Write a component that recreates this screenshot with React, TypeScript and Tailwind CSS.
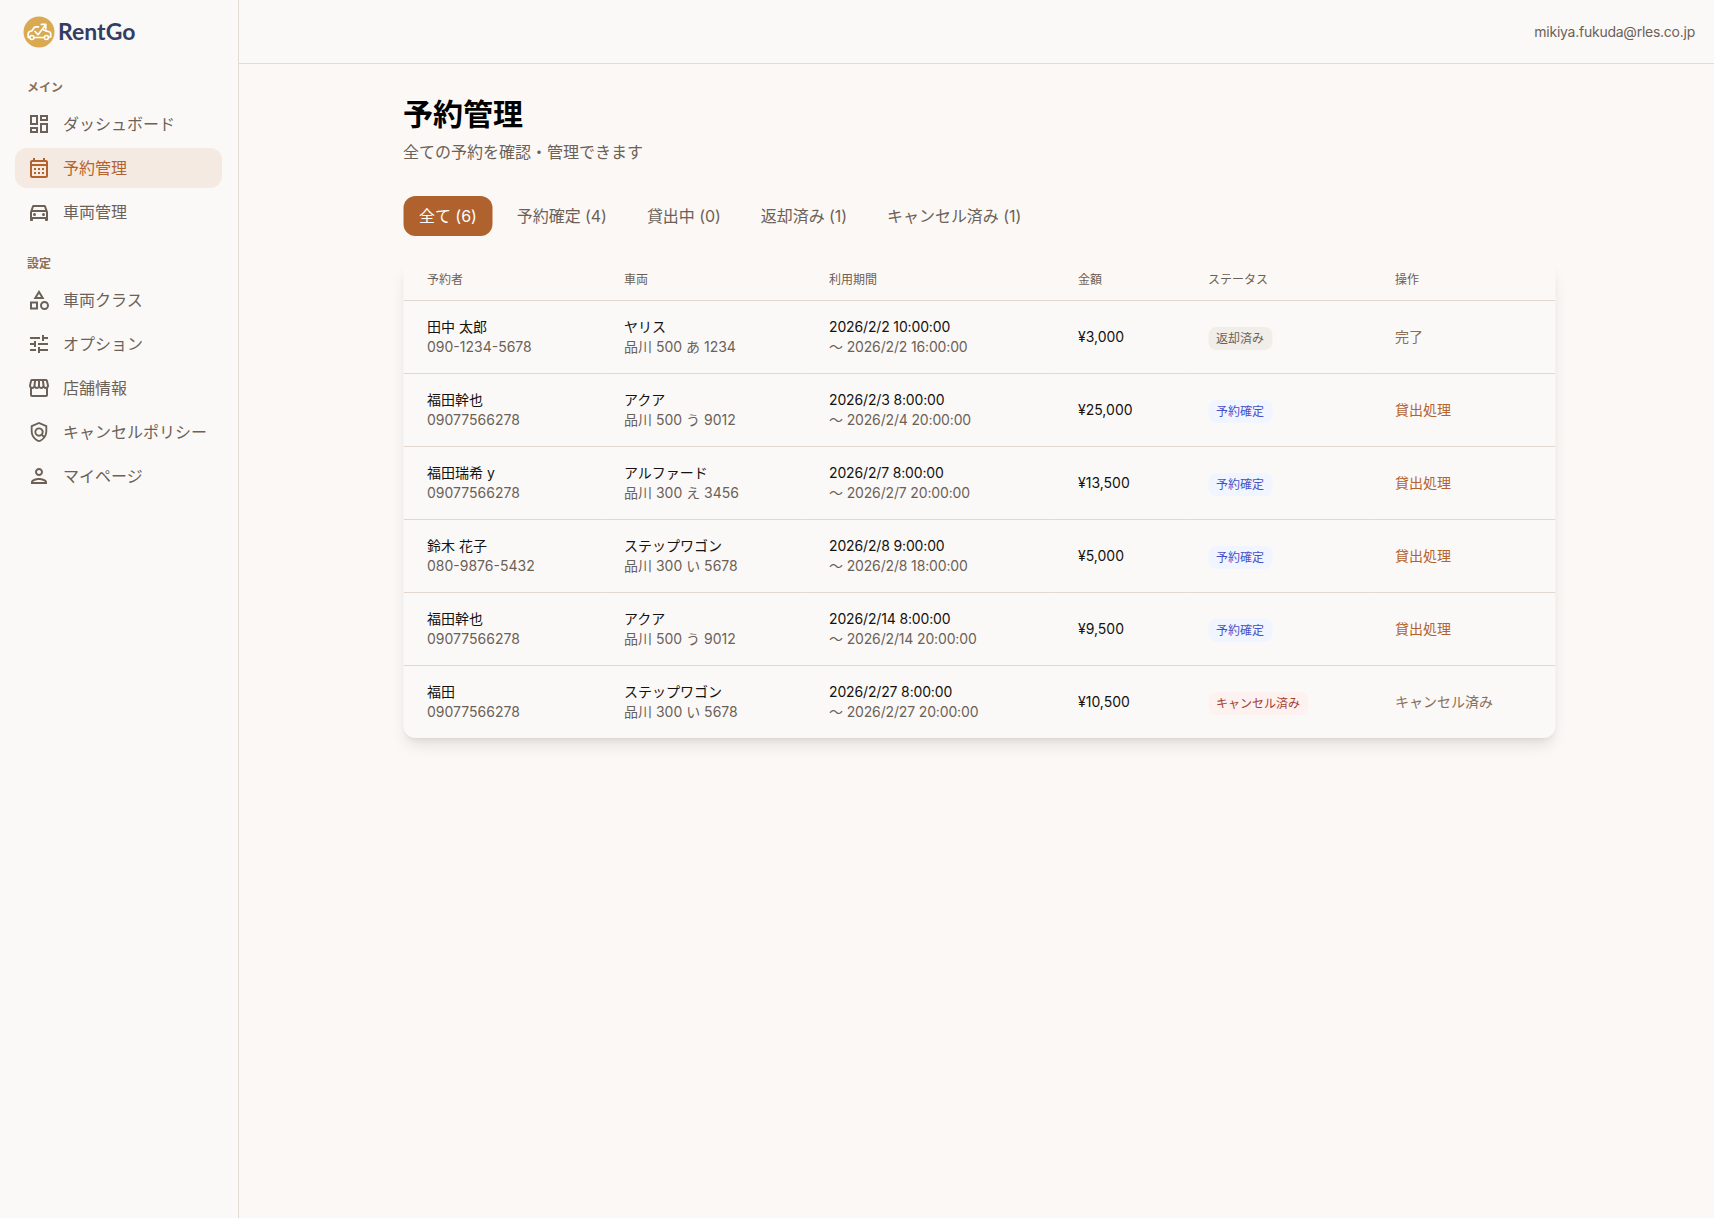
import {
  MdOutlineDashboard,
  MdOutlineCalendarMonth,
  MdOutlineDirectionsCar,
  MdOutlineCategory,
  MdOutlineTune,
  MdOutlineStorefront,
  MdOutlinePolicy,
  MdOutlinePerson,
} from 'react-icons/md';
import type { IconType } from 'react-icons';

const FONT = "font-['Inter','Noto_Sans_CJK_JP',sans-serif]";

type NavItem = { label: string; icon: IconType; iconSize?: number; active?: boolean };

const mainNav: NavItem[] = [
  { label: 'ダッシュボード', icon: MdOutlineDashboard },
  { label: '予約管理', icon: MdOutlineCalendarMonth, active: true },
  { label: '車両管理', icon: MdOutlineDirectionsCar },
];

const settingsNav: NavItem[] = [
  { label: '車両クラス', icon: MdOutlineCategory },
  { label: 'オプション', icon: MdOutlineTune },
  { label: '店舗情報', icon: MdOutlineStorefront },
  { label: 'キャンセルポリシー', icon: MdOutlinePolicy, iconSize: 22 },
  { label: 'マイページ', icon: MdOutlinePerson },
];

const tabs = ['全て (6)', '予約確定 (4)', '貸出中 (0)', '返却済み (1)', 'キャンセル済み (1)'];

type Status = 'returned' | 'confirmed' | 'cancelled';

const rows: {
  name: string;
  phone: string;
  car: string;
  plate: string;
  from: string;
  to: string;
  price: string;
  status: Status;
  action: string;
}[] = [
  { name: '田中 太郎', phone: '090-1234-5678', car: 'ヤリス', plate: '品川 500 あ 1234', from: '2026/2/2 10:00:00', to: '〜 2026/2/2 16:00:00', price: '¥3,000', status: 'returned', action: '完了' },
  { name: '福田幹也', phone: '09077566278', car: 'アクア', plate: '品川 500 う 9012', from: '2026/2/3 8:00:00', to: '〜 2026/2/4 20:00:00', price: '¥25,000', status: 'confirmed', action: '貸出処理' },
  { name: '福田瑞希 y', phone: '09077566278', car: 'アルファード', plate: '品川 300 え 3456', from: '2026/2/7 8:00:00', to: '〜 2026/2/7 20:00:00', price: '¥13,500', status: 'confirmed', action: '貸出処理' },
  { name: '鈴木 花子', phone: '080-9876-5432', car: 'ステップワゴン', plate: '品川 300 い 5678', from: '2026/2/8 9:00:00', to: '〜 2026/2/8 18:00:00', price: '¥5,000', status: 'confirmed', action: '貸出処理' },
  { name: '福田幹也', phone: '09077566278', car: 'アクア', plate: '品川 500 う 9012', from: '2026/2/14 8:00:00', to: '〜 2026/2/14 20:00:00', price: '¥9,500', status: 'confirmed', action: '貸出処理' },
  { name: '福田', phone: '09077566278', car: 'ステップワゴン', plate: '品川 300 い 5678', from: '2026/2/27 8:00:00', to: '〜 2026/2/27 20:00:00', price: '¥10,500', status: 'cancelled', action: 'キャンセル済み' },
];

const Logo = () => (
  <svg width="32" height="32" viewBox="0 0 32 32" fill="none">
    <circle cx="16" cy="16" r="15.5" fill="#d9aa52" />
    <path
      d="M5.2 21v-3.4c0-1 .6-1.8 1.6-2.1l2-.6 2.2-3.2c.5-.6 1.1-.9 1.9-.9h2.6M20 13.4l3 1.5 3.2.8c1 .3 1.5 1 1.5 2V21h-2M11 21.5h10.2M6.6 21.5H5.2"
      stroke="#fff"
      strokeWidth="1.7"
      strokeLinecap="round"
      strokeLinejoin="round"
    />
    <circle cx="8.9" cy="21.5" r="2" stroke="#fff" strokeWidth="1.6" />
    <circle cx="23.4" cy="21.5" r="2" stroke="#fff" strokeWidth="1.6" />
    <path
      d="M12 15.5l3 3.2 7.2-9.2M18.4 8.4h4.4v4.4"
      stroke="#fff"
      strokeWidth="1.7"
      strokeLinecap="round"
      strokeLinejoin="round"
    />
  </svg>
);

const NavGroup = ({ title, items }: { title: string; items: NavItem[] }) => (
  <div>
    <p className="px-[27px] text-xs font-semibold leading-4 text-[#8a6e58]">{title}</p>
    <ul className="mt-2 flex flex-col gap-1 pr-4 pl-[15px]">
      {items.map((item) => (
        <li
          key={item.label}
          className={`flex h-10 items-center gap-[12px] rounded-xl px-[12px] text-base ${
            item.active ? 'bg-[#f5eae2] text-[#b4622c]' : 'text-[#6b6157]'
          }`}
        >
          <span className="flex w-6 shrink-0 justify-center">
            <item.icon size={item.iconSize ?? 24} />
          </span>
          <span>{item.label}</span>
        </li>
      ))}
    </ul>
  </div>
);

const StatusBadge = ({ status }: { status: Status }) => {
  if (status === 'returned') {
    return <span className="mt-1 inline-flex h-[23px] items-center rounded-lg bg-[#f1eee9] px-2 text-xs text-[#6b6157]">返却済み</span>;
  }
  if (status === 'confirmed') {
    return <span className="mt-1 inline-flex h-[23px] items-center rounded-lg bg-[#f1f5ff] px-2 text-xs text-[#4650c8]">予約確定</span>;
  }
  return <span className="mt-1 inline-flex h-[23px] items-center rounded-lg bg-[#fdf2f0] px-2 text-xs text-[#a63d2f]">キャンセル済み</span>;
};

export default function App() {
  return (
    <div className={`${FONT} flex min-h-[1218px] bg-[#fcf8f5] text-[#141210]`}>
      <aside className="flex w-[239px] shrink-0 flex-col border-r border-[#e3dcd5] bg-[#fbf9f7]">
        <div className="flex h-[63px] items-center gap-[3px] px-[23px]">
          <Logo />
          <span className="font-['Lato',sans-serif] text-[23px] font-bold text-[#333d63]">RentGo</span>
        </div>
        <nav className="mt-[17px] flex flex-col gap-6">
          <NavGroup title="メイン" items={mainNav} />
          <NavGroup title="設定" items={settingsNav} />
        </nav>
      </aside>
      <div className="min-w-0 flex-1">
        <header className="flex h-[64px] items-center justify-end border-b border-[#e3dcd5] bg-[#fbf9f7] px-[19px] text-sm tracking-[-0.25px] text-[#6b6157]">
          mikiya.fukuda@rles.co.jp
        </header>
        <main className="mx-auto w-[1152px] translate-x-[2.5px] pt-[32px]">
          <h1 className="text-3xl leading-9 font-bold text-black">予約管理</h1>
          <p className="mt-[8px] text-base text-[#6b6157]">全ての予約を確認・管理できます</p>
          <div className="mt-8 flex gap-2">
            {tabs.map((tab, i) => (
              <button
                key={tab}
                className={`h-10 rounded-xl px-4 text-base tracking-[-0.05px] ${i === 0 ? 'bg-[#b0622e] text-white' : 'text-[#6b6157]'}`}
              >
                {tab}
              </button>
            ))}
          </div>
          <div className="mt-6 overflow-hidden rounded-xl bg-[#fbf9f7] shadow-lg">
            <table className="w-full table-fixed border-collapse text-left">
              <thead>
                <tr className="h-10 border-b border-[#e3d8cf] bg-[#fcf8f5] text-xs text-[#6b6157]">
                  <th className="w-[197px] pl-6 font-normal">予約者</th>
                  <th className="w-[205px] pl-6 font-normal">車両</th>
                  <th className="w-[249px] pl-6 font-normal">利用期間</th>
                  <th className="w-[130px] pl-6 font-normal">金額</th>
                  <th className="w-[187px] pl-6 font-normal">ステータス</th>
                  <th className="pl-6 font-normal">操作</th>
                </tr>
              </thead>
              <tbody>
                {rows.map((row, i) => (
                  <tr key={i} className="h-[73px] border-b border-[#e3d8cf] text-sm leading-5 last:border-b-0">
                    <td className="pl-6">
                      <div>{row.name}</div>
                      <div className="text-[#6b6157]">{row.phone}</div>
                    </td>
                    <td className="pl-6">
                      <div>{row.car}</div>
                      <div className="text-[#6b6157]">{row.plate}</div>
                    </td>
                    <td className="pl-6 tracking-[-0.15px]">
                      <div>{row.from}</div>
                      <div className="text-[#6b6157]">{row.to}</div>
                    </td>
                    <td className="pl-6">{row.price}</td>
                    <td className="pl-6">
                      <StatusBadge status={row.status} />
                    </td>
                    <td className="pl-6">
                      <span className={row.status === 'confirmed' ? 'text-[#b4622c]' : 'text-[#8a6e58]'}>{row.action}</span>
                    </td>
                  </tr>
                ))}
              </tbody>
            </table>
          </div>
        </main>
      </div>
    </div>
  );
}
